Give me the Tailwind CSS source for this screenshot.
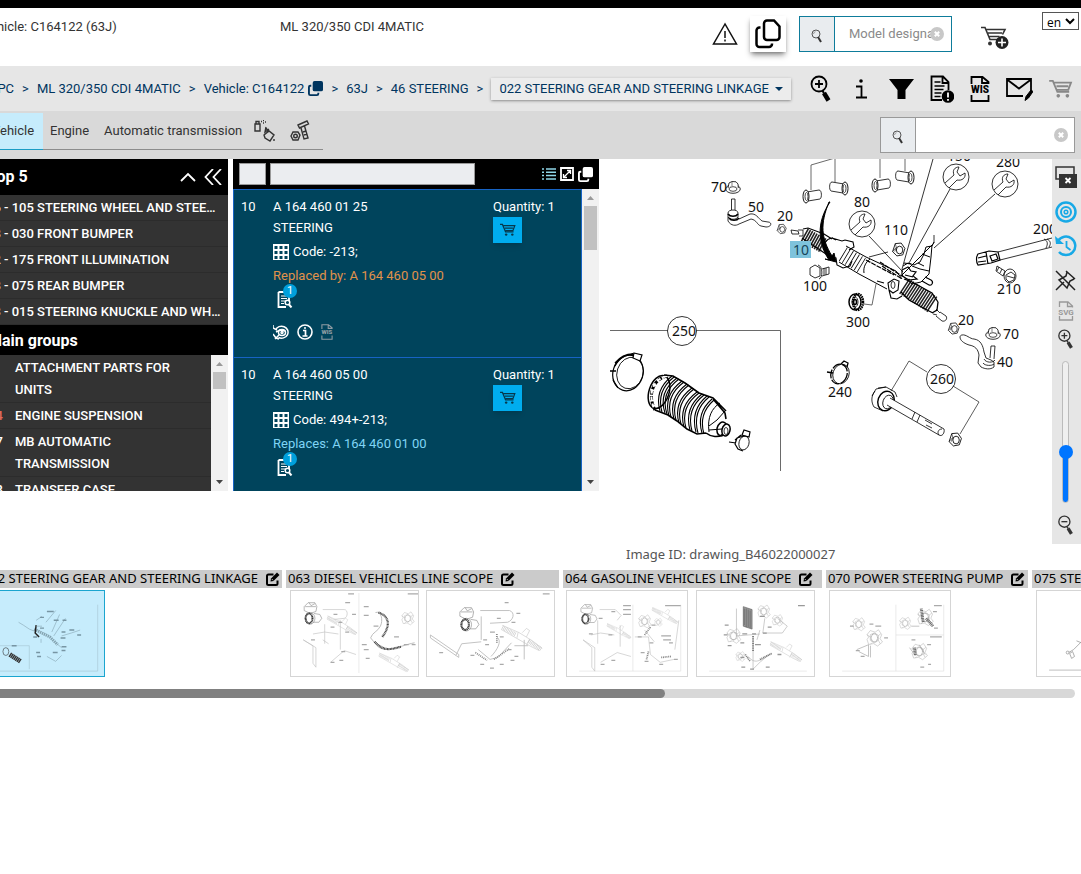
<!DOCTYPE html>
<html lang="en">
<head>
    <meta charset="utf-8"/>
    <meta content="width=device-width, initial-scale=1.0" name="viewport"/>
    <title>Parts catalogue - Steering gear and steering linkage</title>
    <script src="https://cdn.jsdelivr.net/npm/@tailwindcss/browser@4"></script>
</head>
<body class="bg-white overflow-x-hidden font-[Roboto,sans-serif] text-[13px] text-[#333]">

    <!-- shared icons -->
    <svg class="hidden">
        <symbol id="i-search" viewBox="0 0 12 14"><circle cx="5" cy="5" r="4" fill="none" stroke="#555"/><path d="M7 8l3 5" stroke="#333" stroke-width="2"/><path d="M2.500 5a2.500 2.500 0 0 1 2-2.300" fill="none" stroke="#999"/></symbol>
        <symbol id="i-clear" viewBox="0 0 14 14"><circle cx="7" cy="7" r="7" fill="#c8c8c8"/><path d="M4.800 4.800l4.400 4.400M9.200 4.800l-4.400 4.400" stroke="#fff" stroke-width="2"/></symbol>
        <symbol id="i-copy" viewBox="0 0 16 16"><rect x="5" y="0" width="11" height="11" rx="2" fill="currentColor"/><path d="M3.500 5H2.500a1.500 1.500 0 0 0-1.500 1.500v7A1.500 1.500 0 0 0 2.500 15h7A1.500 1.500 0 0 0 11 13.500V12.500" fill="none" stroke="currentColor" stroke-width="2"/></symbol>
        <symbol id="i-cart" viewBox="0 0 26 22"><path d="M0 2h4l5 12h13" fill="none" stroke="currentColor" stroke-width="2"/><path d="M5 4h19l-3 8H8.500M8 8h13" fill="none" stroke="currentColor" stroke-width="2"/><circle cx="10" cy="18.500" r="2" fill="currentColor"/><circle cx="20" cy="18.500" r="2" fill="currentColor"/></symbol>
        <symbol id="i-edit" viewBox="0 0 14 14"><path d="M7.500 2.500H2.500A1.500 1.500 0 0 0 1 4v7.500A1.500 1.500 0 0 0 2.500 13H10a1.500 1.500 0 0 0 1.500-1.500V8.500" fill="none" stroke="#000" stroke-width="2"/><path d="M4.500 9.500l.5-3L11 .5l2.500 2.500-6 6z" fill="#000"/><path d="M5.800 7l1.300 1.300" stroke="#fff" stroke-width=".7"/></symbol>
        <symbol id="i-zoomin" viewBox="0 0 21 27"><circle cx="9" cy="9" r="7.500" fill="none" stroke="currentColor" stroke-width="1.800"/><path d="M5 9h8M9 5v8" stroke="currentColor" stroke-width="1.800"/><path d="M12.500 15.500l1.500 3" stroke="currentColor" stroke-width="2"/><path d="M14 18l4.500 7.500" stroke="currentColor" stroke-width="4.500"/></symbol>
        <symbol id="i-zoomout" viewBox="0 0 21 27"><circle cx="9" cy="9" r="7.500" fill="none" stroke="currentColor" stroke-width="1.800"/><path d="M5 9h8" stroke="currentColor" stroke-width="1.800"/><path d="M12.500 15.500l1.500 3" stroke="currentColor" stroke-width="2"/><path d="M14 18l4.500 7.500" stroke="currentColor" stroke-width="4.500"/></symbol>
        <symbol id="i-wis" viewBox="0 0 20 26"><path d="M1.500 8V1h11l6 5v2M12 1v6h6M1.500 19v6h17v-6" fill="none" stroke="currentColor" stroke-width="1.800"/><text x="10" y="17" text-anchor="middle" font-family="Roboto,sans-serif" font-size="10" font-weight="900" fill="currentColor">WIS</text></symbol>
        <symbol id="i-grid" viewBox="0 0 16 16"><path d="M0 0h16v16H0z" fill="#fff"/><path d="M1.500 2h3v3h-3zM6.500 2h3v3h-3zM11.500 2h3v3h-3zM1.500 7h3v3h-3zM6.500 7h3v3h-3zM11.500 7h3v3h-3zM1.500 12h3v3h-3zM6.500 12h3v3h-3zM11.500 12h3v3h-3z" fill="#00445c"/></symbol>
        <symbol id="i-doc" viewBox="0 0 16 17"><path d="M1.500 1H12v9M1.500 1v15H9" fill="none" stroke="#fff" stroke-width="1.800"/><path d="M4 5h6M4 7.500h6M4 10h4M4 12.500h3" stroke="#fff"/><circle cx="10.500" cy="11.500" r="2.300" fill="none" stroke="#fff" stroke-width="1.500"/><path d="M12 13.500l2.500 3" stroke="#fff" stroke-width="2"/></symbol>
        <symbol id="i-wrench" viewBox="0 0 28 28"><circle cx="14" cy="14" r="13" fill="#fff" stroke="#000" stroke-width=".8"/><path d="M3 20l9-8c-2-5 1-8 5-8l-2 5 3 4 5-3c1 5-3 8-8 7l-8 8" fill="none" stroke="#000" stroke-width=".8"/></symbol>
        <symbol id="i-nut" viewBox="0 0 14 14"><path d="M4 1.500L9.500 1 13 6 11 12 5.500 13 1.500 9z" fill="#fff" stroke="#000" stroke-width=".8"/><ellipse cx="8" cy="7.500" rx="3" ry="3.600" fill="none" stroke="#000" stroke-width=".8"/><path d="M4 1.500L5 5 3.500 9M5 5l-3.500 4" fill="none" stroke="#000" stroke-width=".5"/></symbol>
        <symbol id="i-flange" viewBox="0 0 16 13"><ellipse cx="8" cy="8" rx="7.300" ry="4.300" fill="#fff" stroke="#000" stroke-width=".8"/><path d="M3 7l1-5 3-1.500 4 .3L13 3l.3 4" fill="#fff" stroke="#000" stroke-width=".8"/><ellipse cx="8" cy="8" rx="4" ry="2.300" fill="none" stroke="#000" stroke-width=".7"/><path d="M7 1v4" stroke="#000" stroke-width=".5"/></symbol>
        <symbol id="i-sleeve" viewBox="0 0 20 16"><path d="M5 4l12-2c3 0 3 8 1 9L6 13" fill="#fff" stroke="#000" stroke-width=".8"/><ellipse cx="4" cy="8.500" rx="3" ry="6.500" fill="#fff" stroke="#000" stroke-width=".9"/><ellipse cx="4.500" cy="8.500" rx="1.500" ry="4" fill="none" stroke="#000" stroke-width=".7"/></symbol>

        <!-- pieces used by the thumbnails -->
        <symbol id="t-pump" viewBox="0 0 24 24"><g fill="none" stroke="#888" stroke-width=".6"><path d="M2 5l4-4h7l2 4-1 5-6 2-6-3z"/><path d="M3 5h11M7 1l2 3 4-2"/><ellipse cx="8" cy="17" rx="5" ry="6"/><path d="M12 12l6 1 2 4-3 4h-6"/></g><ellipse cx="7" cy="17" rx="3.500" ry="5" fill="none" stroke="#333" stroke-width="2" stroke-dasharray="1 .4"/></symbol>
        <symbol id="t-rack" viewBox="0 0 40 26"><path d="M1 3l13 7M26 16l12 8" stroke="#ccc" stroke-width="4" stroke-dasharray=".7 .8"/><path d="M1 1l16 7 13 8 9 7M0 5l14 8 14 8 8 4M16 8l-1 5M27 14l-3 6M20 8l4-4 3 2-3 6" fill="none" stroke="#bbb" stroke-width=".5"/></symbol>
        <symbol id="t-blob" viewBox="0 0 24 24"><path d="M3 8l4-5 6 2 4-3 4 6-2 5 3 4-6 5-5-3-6 1-2-6 2-3zM7 8l5-2 5 3v6l-5 3-5-3zM3 8l4 3M17 9l3-2M17 15l2 4M9 18l-2 2" fill="none" stroke="#aaa" stroke-width=".6"/><ellipse cx="12" cy="12" rx="4" ry="5" fill="none" stroke="#999" stroke-width="1.500" stroke-dasharray=".6 .6"/></symbol>
    </svg>

    <div class="-ml-5">
        <div class="h-2 bg-black"></div>

        <!-- header -->
        <header class="flex h-[58px] pl-0.5 pr-0.5">
            <div class="flex flex-1 pt-2.5 leading-[18px]">
                <span class="w-[298px]">Vehicle: C164122 (63J)</span>
                <span>ML 320/350 CDI 4MATIC</span>
            </div>
            <div class="flex items-start pt-2">
                <svg class="w-[26px] h-6 mt-1.5 mr-3" viewBox="0 0 26 24" fill="none" stroke="#111" stroke-width="1.500"><path d="M13 2L1.500 22h23z"/><path d="M13 9v7M13 17.500v2"/></svg>
                <button class="flex size-9 items-center justify-center bg-white shadow-md shadow-black/40 mr-[13px]" aria-label="Copy">
                    <svg class="w-[26px] h-[30px]" viewBox="0 0 26 30" fill="none" stroke="#000" stroke-width="2.500"><path d="M12 1.500h7l5.500 6V18a3 3 0 0 1-3 3H12a3 3 0 0 1-3-3V4.500a3 3 0 0 1 3-3z"/><path d="M5.500 8.500H4.500A3 3 0 0 0 1.500 11.500V25a3 3 0 0 0 3 3H14a3 3 0 0 0 3-3v-.5"/></svg>
                </button>
                <div class="relative flex h-9 w-[153px] border border-[#0e7c9b] mr-[29px]">
                    <button class="flex w-[35px] items-center justify-center bg-[#e9ecef] border-r border-[#0e7c9b] pt-1" aria-label="Search"><svg class="w-3 h-3.5"><use href="#i-search"/></svg></button>
                    <input class="min-w-0 flex-1 pl-3.5 pr-[18px] outline-none placeholder:text-[#8a8a8a]" type="text" placeholder="Model designation" aria-label="Model designation"/>
                    <svg class="absolute right-[7px] top-2.5 size-3.5"><use href="#i-clear"/></svg>
                </div>
                <a href="#" class="mt-2.5 mr-[33px] text-[#333]" aria-label="Add to cart">
                    <svg class="w-7 h-[23px]" viewBox="0 0 28 23"><path d="M0 1.500h4l5 12h11M5 3.500h19l-2.500 5M7 7h14M8.500 10.500h10" fill="none" stroke="#333" stroke-width="1.600"/><circle cx="9" cy="17.500" r="2" fill="#333"/><circle cx="21" cy="16.500" r="6.500" fill="#222"/><path d="M21 12.500v8M17 16.500h8" stroke="#fff" stroke-width="1.600"/></svg>
                </a>
                <select class="-mt-1 h-[18px] w-[37px] border border-[#555] bg-white pl-0 text-black font-['Open_Sans',sans-serif] text-xs leading-4" aria-label="Language"><option>en</option></select>
            </div>
        </header>

        <!-- breadcrumb -->
        <div class="flex h-[45px] items-center bg-[#e6e6e6] pl-2.5 pr-2 text-[#00355f]">
            <nav class="flex flex-1 items-center gap-2 whitespace-nowrap">
                <a href="#">EPC</a><span>&gt;</span>
                <a href="#">ML 320/350 CDI 4MATIC</a><span>&gt;</span>
                <a href="#" class="flex items-center gap-1">Vehicle: C164122 <svg class="size-[15px]"><use href="#i-copy"/></svg></a><span>&gt;</span>
                <a href="#">63J</a><span>&gt;</span>
                <a href="#">46 STEERING</a><span>&gt;</span>
                <button class="flex h-[22px] items-center gap-1.5 bg-[#ececec] px-2 shadow-sm shadow-black/30">022 STEERING GEAR AND STEERING LINKAGE <svg class="w-2 h-1" viewBox="0 0 8 4"><path d="M0 0h8L4 4z" fill="#00355f"/></svg></button>
            </nav>
            <div class="flex items-center gap-4 text-black">
                <svg class="w-[21px] h-[27px] mr-2"><use href="#i-zoomin"/></svg>
                <svg class="w-3 h-5 mr-1.5" viewBox="0 0 12 20"><path d="M1 7.500h5.500V18.500M1 18.500h11" fill="none" stroke="#000" stroke-width="1.800"/><circle cx="6" cy="2" r="1.800"/></svg>
                <svg class="w-[25px] h-[22px]" viewBox="0 0 25 22"><path d="M0 1h25l-8.500 11v9h-8v-9z"/></svg>
                <svg class="w-6 h-7" viewBox="0 0 24 28"><path d="M12 25H1.500V1.500H13L18.500 7v8M12.500 2v6h6" fill="none" stroke="#000" stroke-width="1.800"/><path d="M4.500 7h6M4.500 11h10M4.500 14.500h9M4.500 18h7M4.500 21.500h6" stroke="#000" stroke-width="1.600"/><circle cx="18" cy="21.500" r="6.300"/><path d="M18 17.500v5M18 24v1.800" stroke="#fff" stroke-width="1.800"/></svg>
                <svg class="w-5 h-[26px]"><use href="#i-wis"/></svg>
                <svg class="w-[27px] h-6" viewBox="0 0 27 24"><path d="M17 19H1V2h24v13M1 2.500l12 9 12-9" fill="none" stroke="#000" stroke-width="1.800"/><path d="M19 23.500l1-4L25 13l2 1.500-4.500 6.500z" stroke="#000"/></svg>
                <svg class="w-6 h-5 text-[#888]"><use href="#i-cart"/></svg>
            </div>
        </div>

        <!-- catalogue tabs -->
        <div class="flex h-12 items-start justify-between bg-[#d9d9d9] pr-1.5">
            <nav class="flex h-[37px] mt-0.5">
                <a href="#" class="flex w-[63px] items-center border-b border-[#1b9cc4] bg-[#c6ecfc] pl-3">Vehicle</a>
                <div class="flex w-[280px] items-center border-b border-[#8c8c8c] pl-[7px]">
                    <a href="#" class="mr-[15px]">Engine</a>
                    <a href="#" class="mr-3 whitespace-nowrap">Automatic transmission</a>
                    <svg class="w-[22px] h-[22px] mr-3.5" viewBox="0 0 22 22" fill="none" stroke="#333" stroke-width="1.400"><path d="M1 4h5v7H1zM2 4V1.500h3V4M7 1.500h1M9 .5h1M9 3h1M11 2h1M12 7l-1 5 4-3M10 15l5-4 5 4-4 6-5-3zM12 8l3 4M20 19v2"/></svg>
                    <svg class="w-5 h-[22px]" viewBox="0 0 20 22" fill="none" stroke="#333" stroke-width="1.400"><path d="M1 16l2-4h5l2 3-2 5H3z"/><circle cx="5.500" cy="16" r="1.800"/><path d="M8 5l9-4 1.500 3-9 4zM11 8l3 11 4-1-3.500-12M13 12l3-1M14 15l3-1"/></svg>
                </div>
            </nav>
            <div class="relative mt-1.5 flex h-9 w-[195px] border border-[#999] bg-white">
                <button class="flex w-[35px] items-center justify-center bg-[#e9ecef] border-r border-[#999] pt-1" aria-label="Search parts"><svg class="w-3 h-3.5"><use href="#i-search"/></svg></button>
                <input class="min-w-0 flex-1 px-2 outline-none" type="text" aria-label="Search parts"/>
                <svg class="absolute right-1.5 top-2.5 size-3.5"><use href="#i-clear"/></svg>
            </div>
        </div>

        <main class="flex items-start">
            <!-- group navigation -->
            <aside class="mr-[5px] flex h-[332px] w-[248px] shrink-0 flex-col overflow-hidden bg-[#333] font-medium text-white">
                <div class="flex h-9 shrink-0 items-center bg-black pl-2 pr-1.5">
                    <h2 class="flex-1 text-base font-bold">Top 5</h2>
                    <svg class="w-4 h-2.5 mr-2" viewBox="0 0 16 10" fill="none" stroke="#fff" stroke-width="1.800"><path d="M1 9l7-7 7 7"/></svg>
                    <svg class="w-[18px] h-4" viewBox="0 0 18 16" fill="none" stroke="#fff" stroke-width="1.800"><path d="M9 0L1.500 8 9 16M17 0L9.500 8 17 16"/></svg>
                </div>
                <ul class="shrink-0 leading-[25px]">
                    <li class="truncate border-b border-[#2c2c2c] pl-1.5 pr-1.5">46 - 105 STEERING WHEEL AND STEERING</li>
                    <li class="truncate border-b border-[#2c2c2c] pl-1.5 pr-1.5">88 - 030 FRONT BUMPER</li>
                    <li class="truncate border-b border-[#2c2c2c] pl-1.5 pr-1.5">82 - 175 FRONT ILLUMINATION</li>
                    <li class="truncate border-b border-[#2c2c2c] pl-1.5 pr-1.5">88 - 075 REAR BUMPER</li>
                    <li class="truncate border-b border-[#2c2c2c] pl-1.5 pr-1.5">33 - 015 STEERING KNUCKLE AND WHEEL</li>
                </ul>
                <h2 class="h-[30px] shrink-0 bg-black pl-2 text-base font-bold leading-8">Main groups</h2>
                <div class="flex min-h-0 flex-1">
                    <ul class="flex-1 overflow-hidden leading-[22px]">
                        <li class="flex border-b border-[#2c2c2c] pt-0.5 pb-px pl-2"><span class="w-[27px]"></span><span class="w-[170px]">ATTACHMENT PARTS FOR UNITS</span></li>
                        <li class="flex border-b border-[#2c2c2c] pt-0.5 pb-px pl-2"><span class="w-[27px] text-[#e06a5a]">24</span><span>ENGINE SUSPENSION</span></li>
                        <li class="flex border-b border-[#2c2c2c] pt-0.5 pb-px pl-2"><span class="w-[27px]">27</span><span class="w-[120px]">MB AUTOMATIC TRANSMISSION</span></li>
                        <li class="flex border-b border-[#2c2c2c] pt-0.5 pb-px pl-2"><span class="w-[27px]">28</span><span>TRANSFER CASE</span></li>
                    </ul>
                    <div class="flex w-[17px] flex-col items-center bg-[#f1f1f1] py-[7px]">
                        <svg class="w-[7px] h-1" viewBox="0 0 7 4"><path d="M0 4h7L3.500 0z" fill="#999"/></svg>
                        <div class="mt-1.5 h-[17px] w-[13px] bg-[#c1c1c1]"></div>
                        <svg class="mt-auto w-[7px] h-1" viewBox="0 0 7 4"><path d="M0 0h7L3.500 4z" fill="#444"/></svg>
                    </div>
                </div>
            </aside>

            <!-- parts list -->
            <section class="flex h-[332px] w-[366px] shrink-0 flex-col overflow-hidden">
                <div class="flex h-[30px] shrink-0 items-center bg-black pl-1.5 pr-1.5">
                    <input class="mr-1 h-[22px] w-[27px] border border-[#999] bg-[#ebedf0]" type="text" aria-label="Position"/>
                    <input class="h-[22px] w-[205px] border border-[#999] bg-[#ebedf0]" type="text" aria-label="Filter parts"/>
                    <div class="ml-auto flex items-center gap-1">
                        <svg class="w-3.5 h-3" viewBox="0 0 14 12" stroke="#8fd6e8" stroke-width="1.500"><path d="M0 1h2M4 1h10M0 4.300h2M4 4.300h10M0 7.600h2M4 7.600h10M0 11h2M4 11h10"/></svg>
                        <svg class="size-3.5" viewBox="0 0 14 14"><path d="M1 1h12v12H1z" fill="none" stroke="#fff" stroke-width="1.800"/><path d="M4 10l6-6M7 3.500h3.500V7M3.500 7v3.500H7" fill="none" stroke="#fff" stroke-width="1.300"/></svg>
                        <svg class="size-[15px] text-white"><use href="#i-copy"/></svg>
                    </div>
                </div>
                <div class="flex min-h-0 flex-1">
                    <div class="flex-1 overflow-hidden border-x border-[#1763c4] bg-[#00445c] text-white">
                        <article class="flex h-[168px] border-t border-[#1763c4] pl-[7px] pt-[7px]">
                            <span class="w-8 leading-5">10</span>
                            <div class="w-[220px]">
                                <p class="leading-5">A 164 460 01 25</p>
                                <p class="leading-[22px]">STEERING</p>
                                <p class="flex h-[26px] items-center gap-1"><svg class="size-4"><use href="#i-grid"/></svg>Code: -213;</p>
                                <p class="leading-[22px] text-[#e0924a]">Replaced by: A 164 460 05 00</p>
                                <div class="relative ml-1 mt-1 h-[17px] w-4">
                                    <svg class="w-4 h-[17px]"><use href="#i-doc"/></svg>
                                    <span class="absolute left-1.5 -top-[7px] size-3.5 rounded-full bg-[#00a0dc] text-center text-[11px] leading-3.5">1</span>
                                </div>
                                <div class="mt-4 flex items-center gap-2">
                                    <svg class="size-4" viewBox="0 0 16 16" fill="none" stroke="#fff" stroke-width="1.500"><path d="M2.500 6a6.500 6 0 1 1 3 7.500M0 1v3l4 2M3 8l4-2 5 1M0 10l3 4 3 1M2 15l4-4"/><ellipse cx="9" cy="8.500" rx="3.500" ry="3"/><circle cx="9" cy="8.500" r="1"/></svg>
                                    <svg class="size-4" viewBox="0 0 16 16"><circle cx="8" cy="8" r="7" fill="none" stroke="#fff" stroke-width="1.600"/><path d="M6 6.500h2.500v5M5.500 12h5M7 4h2" fill="none" stroke="#fff" stroke-width="1.700"/></svg>
                                    <svg class="w-3 h-4 text-[#8f9ca3]"><use href="#i-wis"/></svg>
                                </div>
                            </div>
                            <div>
                                <p class="leading-5">Quantity: 1</p>
                                <button class="flex h-[26px] w-[29px] items-center justify-center bg-[#00adef] text-[#06384c] shadow-md" aria-label="Add to cart"><svg class="w-4 h-3.5"><use href="#i-cart"/></svg></button>
                            </div>
                        </article>
                        <article class="flex h-[168px] border-t border-[#1763c4] pl-[7px] pt-[7px]">
                            <span class="w-8 leading-5">10</span>
                            <div class="w-[220px]">
                                <p class="leading-5">A 164 460 05 00</p>
                                <p class="leading-[22px]">STEERING</p>
                                <p class="flex h-[26px] items-center gap-1"><svg class="size-4"><use href="#i-grid"/></svg>Code: 494+-213;</p>
                                <p class="leading-[22px] text-[#7fd4f5]">Replaces: A 164 460 01 00</p>
                                <div class="relative ml-1 mt-1 h-[17px] w-4">
                                    <svg class="w-4 h-[17px]"><use href="#i-doc"/></svg>
                                    <span class="absolute left-1.5 -top-[7px] size-3.5 rounded-full bg-[#00a0dc] text-center text-[11px] leading-3.5">1</span>
                                </div>
                            </div>
                            <div>
                                <p class="leading-5">Quantity: 1</p>
                                <button class="flex h-[26px] w-[29px] items-center justify-center bg-[#00adef] text-[#06384c] shadow-md" aria-label="Add to cart"><svg class="w-4 h-3.5"><use href="#i-cart"/></svg></button>
                            </div>
                        </article>
                    </div>
                    <div class="flex w-[17px] flex-col items-center bg-[#f1f1f1] py-[7px]">
                        <svg class="w-[7px] h-1" viewBox="0 0 7 4"><path d="M0 4h7L3.500 0z" fill="#999"/></svg>
                        <div class="mt-1.5 h-11 w-[13px] bg-[#c1c1c1]"></div>
                        <svg class="mt-auto w-[7px] h-1" viewBox="0 0 7 4"><path d="M0 0h7L3.500 4z" fill="#444"/></svg>
                    </div>
                </div>
            </section>

            <!-- exploded drawing -->
            <figure class="min-w-0 flex-1">
                <svg class="block h-[385px] w-full" viewBox="599 159 453 385" fill="none" stroke="#000" stroke-width=".8">
                    <!-- rack, left end -->
                    <path d="M791 230l7 1 1 3-7 0zM798 230h5v6h-4"/>
                    <path d="M804 235l20 11" stroke="#222" stroke-width="15" stroke-dasharray="1.600 .9"/>
                    <path d="M803 229l5-1 16 6 8 5M802 238l18 12 12 8" stroke-width="1.200"/>
                    <path d="M824 250c-1-6 2-11 8-12l4 2M832 238l10 3 3-1 8 2 1 5-5 3M831 257l5 1 1 7 6 3 7-2 2-5M824 250l8 7" stroke-width="1.100"/>
                    <path d="M843 254l20 12" stroke-width="16" stroke-dasharray=".8 2.700"/>
                    <path d="M846 246l20 11M839 262l20 12M866 257l30 14 6 8M859 274l28 15M870 259c-4 3-7 8-6 14" stroke-width="1"/>
                    <path d="M866 260l28 15M880 262l22 14M882 266l20 13" stroke-width="1.200" stroke-dasharray="5 1"/>
                    <path d="M888 283l6-4 5 2-1 9-5 3-4-3zM889 290l2 8 6 1 5-3M884 283l-7-2" stroke-width="1.100"/>
                    <ellipse cx="893" cy="285" rx="2" ry="3.500"/>
                    <path d="M904 286l29 19" stroke="#222" stroke-width="18" stroke-dasharray="1.500 1"/>
                    <path d="M904 279l8 3 20 11 6 9M901 292l8 8 18 10 6 3M938 302l-1 8-5 3" stroke-width="1.300"/>
                    <path d="M936 309l4 4M933 314l4 1M940 312l6 4c2 3-1 6-4 5l-6-5"/>
                    <!-- pinion and valve -->
                    <path d="M903 266l5-3 6 2 6-3 4-8 2-7 6-1 2-4M932 245l-1 12-2 17-8 8-9 2-10-9zM912 266l8 3 9 2M918 263l6 3M922 254l8 3" stroke-width="1"/>
                    <path d="M902 270l6-3 3 4 5 1-3 4 4 3-8 1-7-4zM904 263l7 1M905 275l8 2M925 277l6 3c3 2 1 6-2 5l-7-4" stroke-width="1.200"/>
                    <path d="M932 245l2-2v-8"/>
                    <!-- leader lines -->
                    <path d="M869 236l34 36M933 159l-31 110M950 189l-41 74M995 194l-61 54M888 252l-19 5"/>
                    <path d="M811 190v-25l24-7v24M880 158v20M905 158v13M864 304l8 1 4-21" stroke="#444"/>
                    <!-- curved arrow -->
                    <path d="M830 202c-14 21-12 41-1 58l-4-1 11 3-2-9-2 3c-11-18-12-32-3-54z" fill="#000" stroke-width="1"/>
                    <!-- ball joint 50 -->
                    <path d="M731.500 199v11M735 199v11M731.500 199h3.500M728 213c0-4 10-4 10 0v4c-2 3-8 3-10 0zM728 217v4c3 5 8 5 11 3l12-5c6 1 6 6 10 7l5 1c6 0 6-5 2-5l-6-1c-4-3-6-8-12-7l-11 5"/>
                    <path d="M728 214c2 3 8 3 10 0M729 218c2 3 8 3 10 0" stroke-width="1.600"/>
                    <use href="#i-flange" x="725" y="181" width="16" height="13"/>
                    <use href="#i-nut" x="776" y="223" width="11" height="12"/>
                    <use href="#i-nut" x="891" y="242" width="15" height="15"/>
                    <use href="#i-nut" x="947" y="322" width="13" height="13"/>
                    <use href="#i-nut" x="947" y="432" width="16" height="15"/>
                    <use href="#i-flange" x="985" y="327" width="16" height="13"/>
                    <use href="#i-sleeve" x="802" y="188" width="20" height="16"/>
                    <use href="#i-sleeve" x="871" y="177" width="20" height="16"/>
                    <use href="#i-sleeve" x="-849" y="180" width="20" height="16" transform="scale(-1 1)"/>
                    <use href="#i-sleeve" x="-915" y="169" width="20" height="16" transform="scale(-1 1)"/>
                    <use href="#i-wrench" x="848" y="210" width="28" height="28"/>
                    <use href="#i-wrench" x="942" y="163" width="28" height="28"/>
                    <use href="#i-wrench" x="991" y="170" width="28" height="28"/>
                    <!-- bolt 100, plug 300, bolt 210 -->
                    <path d="M810 268l5-3 5 3v8l-5 2-5-3zM818 265c5 1 5 13 1 14M822 269l7-2v7l-7 2M824 268v7M826 268v7"/>
                    <ellipse cx="855" cy="302" rx="6" ry="8" stroke-width="1.500"/>
                    <ellipse cx="858" cy="302" rx="5" ry="8" stroke-width="2.500" stroke-dasharray="1.500 .7"/>
                    <ellipse cx="855" cy="302" rx="3" ry="5"/>
                    <ellipse cx="855" cy="302" rx="1.500" ry="2.500" stroke-width="1.500"/>
                    <path d="M997 266l8 5-2 5-7-5zM999 267l-2 4M1002 269l-2 4"/>
                    <ellipse cx="1010" cy="276" rx="6" ry="7"/>
                    <path d="M1006 275l5-3 4 3-1 5-5 2-3-3zM1007 276l7 2"/>
                    <!-- shaft 200 -->
                    <path d="M998 252l54-14M1000 260l52-13M1044 239c4 2 4 5 2 9M1047 239c4 2 4 5 2 8"/>
                    <path d="M978 254l11-3 9 1 2 8-9 3-13 2c-2-3-2-8 0-11zM986 252l2 12M978 258l8-2M978 262l8-1M990 256l6-2 2 5-6 2z" stroke-width="1.200"/>
                    <!-- tie rod end 40 -->
                    <path d="M962 335c4-1 8 4 12 4 7 1 9 7 10 13l2 6 5 2 3 2v5c-4 3-9 2-13 0l-3-4 1-8c-1-6-4-9-10-10-6-2-9-5-9-8 0-1 1-2 2-2zM990 358l1-12h4l-1 13M984 359c2 4 9 4 11 1M983 363c2 3 9 3 11 1"/>
                    <!-- kit 250 -->
                    <path d="M610 330.500h170.500V471" stroke="#444"/>
                    <circle cx="682" cy="331" r="14.500" fill="#fff"/>
                    <ellipse cx="628" cy="373" rx="15" ry="18" transform="rotate(18 628 373)" stroke-width="1.200"/>
                    <ellipse cx="630" cy="373" rx="13" ry="16" transform="rotate(18 630 373)"/>
                    <path d="M615 366c4-8 9-11 19-12M615 363c5-6 11-9 18-9M613 380l5 8M610 371h6" stroke-width="1.300"/>
                    <path d="M634 353l8 2-2 6-7-3z" fill="#fff" stroke-width="1.200"/>
                    <ellipse cx="659" cy="392" rx="10" ry="17" transform="rotate(18 659 392)" stroke-width="1.500"/>
                    <path d="M667 376c-14 3-20 19-12 34" stroke-width="3" stroke-dasharray="4 1.500"/>
                    <path d="M667 376c-14 3-20 19-12 34" stroke="#fff" stroke-width="2" stroke-dasharray="4 3"/>
                    <path d="M664 375l9 1 12 7 14 10 14 5 13 13M655 410l13 5 9 6 10 8 10 5 9-1M713 399l12 14 1 6M706 433c5 4 13 5 17 1" stroke-width="1.600"/>
                    <g id="ribs" stroke-width="1.100">
                        <path d="M672 376q-18 14-12 35M677 378q-19 14-12 35M682 381q-19 14-13 35M687 384q-19 14-13 35M692 388q-19 14-13 35M697 392q-19 14-13 35M702 394q-18 14-12 36M707 396q-17 14-11 36M712 399q-16 14-10 34"/>
                    </g>
                    <use href="#ribs" x="2" y="1"/>
                    <path d="M720 403c-8 5-13 14-11 29M709 426l8-6 8-9M709 430l13-1" stroke-width="1"/>
                    <ellipse cx="722" cy="429" rx="5" ry="7" transform="rotate(15 722 429)" stroke-width="1.500"/>
                    <ellipse cx="726" cy="430" rx="4" ry="6" transform="rotate(15 726 430)" fill="#fff" stroke-width="1.500"/>
                    <ellipse cx="726" cy="431" rx="2" ry="3.500"/>
                    <ellipse cx="744" cy="443" rx="5" ry="7" transform="rotate(15 744 443)"/>
                    <path d="M744 436l-7 2-2 6 3 5 5 2M729 442l7 1M742 435l2-5 6 2-1 5zM735 440l6-5" stroke-width="1.200"/>
                    <!-- clamp 240 -->
                    <ellipse cx="839" cy="374" rx="8" ry="10" transform="rotate(20 839 374)" stroke-width="1.300" stroke-dasharray="9 1.500"/>
                    <ellipse cx="841" cy="374" rx="8" ry="10" transform="rotate(20 841 374)"/>
                    <path d="M827 372l6 1M841 364l3-3 4 2-1 4" stroke-width="1.300"/>
                    <!-- kit 260 -->
                    <path d="M927 372l-18-11-18 30M953 386l26 16-19 32" stroke="#333"/>
                    <circle cx="941" cy="379" r="14.500"/>
                    <path d="M878 388l8-1 9 5M875 391c-4 5-4 11-1 16l9 4M886 387l-10 2M872 396l4-7M895 392l2 5"/>
                    <ellipse cx="886" cy="401" rx="8" ry="10" transform="rotate(20 886 401)" stroke-width="1.400"/>
                    <ellipse cx="888" cy="402" rx="5" ry="7" transform="rotate(20 888 402)"/>
                    <path d="M890 398l54 31c1 4-2 8-5 6l-52-30" fill="#fff"/>
                    <path d="M942 429c-4 0-5 4-3 6M915 412l-3 7M920 415l-3 7M925 420l7 4M926 425l6 3"/>
                    <!-- position numbers -->
                    <path d="M790 241h21v17h-21z" fill="#7ec3dc" stroke="none"/>
                    <g fill="#111" stroke="none" font-family="'Noto Sans',sans-serif" font-size="14">
                        <text x="711" y="192">70</text>
                        <text x="748" y="212">50</text>
                        <text x="777" y="221">20</text>
                        <text x="793" y="255" fill="#17455a">10</text>
                        <text x="803" y="291">100</text>
                        <text x="854" y="207">80</text>
                        <text x="884" y="235">110</text>
                        <text x="947" y="161">150</text>
                        <text x="996" y="167">280</text>
                        <text x="1033" y="234">200</text>
                        <text x="997" y="294">210</text>
                        <text x="846" y="327">300</text>
                        <text x="958" y="325">20</text>
                        <text x="1003" y="339">70</text>
                        <text x="997" y="367">40</text>
                        <text x="672" y="336">250</text>
                        <text x="828" y="397">240</text>
                        <text x="930" y="384">260</text>
                    </g>
                </svg>
                <figcaption class="pl-[27px] font-['Noto_Sans',sans-serif] leading-5 text-[#555]">Image ID: drawing_B46022000027</figcaption>
            </figure>

            <!-- drawing tools -->
            <div class="flex h-[385px] w-[29px] flex-col items-center bg-[#e6e6e6] pt-1.5 pr-0.5">
                <svg class="w-[22px] h-6" viewBox="0 0 22 24"><path d="M1 2h18v12H1z" fill="none" stroke="#333" stroke-width="1.500"/><path d="M4 9h18v14H4z" fill="#333"/><path d="M10.500 13l5 5M15.500 13l-5 5" stroke="#fff" stroke-width="1.800"/></svg>
                <svg class="mt-3 size-[22px]" viewBox="0 0 22 22" fill="none" stroke="#18a9e6"><circle cx="11" cy="11" r="9.500" stroke-width="2.500"/><circle cx="11" cy="11" r="5" stroke-width="2"/><circle cx="11" cy="11" r="1.800" stroke-width="1.500"/></svg>
                <svg class="mt-3 size-[22px]" viewBox="0 0 22 22" fill="none" stroke="#18a9e6" stroke-width="2.500"><path d="M3 6a9.300 9.300 0 1 1 1 11"/><path d="M0 1l1 8h8z" fill="#18a9e6" stroke="none"/><path d="M11.500 6v6l4 3" stroke-width="1.800"/></svg>
                <svg class="mt-3 size-[22px]" viewBox="0 0 22 22" fill="none" stroke="#222" stroke-width="1.500"><path d="M1 2l19 19M1 21l8-8M11 2l9 8M12 3l-1 4-7 4 8 8 3-7 4-2"/></svg>
                <svg class="mt-2.5 w-4 h-5" viewBox="0 0 16 20"><path d="M1.500 6V1H10l4.500 4v1.500M9.500 1v4.500h5M1.500 15v4h13v-4" fill="none" stroke="#999" stroke-width="1.300"/><text x="8" y="13.500" text-anchor="middle" font-family="Roboto,sans-serif" font-size="8" font-weight="700" fill="#999">SVG</text></svg>
                <svg class="mt-2 w-[17px] h-5 text-[#333]"><use href="#i-zoomin"/></svg>
                <input class="mt-3 h-[142px] w-3.5 appearance-none bg-transparent [writing-mode:vertical-lr] [direction:rtl] [&::-webkit-slider-runnable-track]:h-full [&::-webkit-slider-runnable-track]:w-[7px] [&::-webkit-slider-runnable-track]:rounded-full [&::-webkit-slider-runnable-track]:border [&::-webkit-slider-runnable-track]:border-[#bbb] [&::-webkit-slider-runnable-track]:bg-[linear-gradient(to_top,#0075ff_36%,#efefef_36%)] [&::-webkit-slider-thumb]:-ml-1 [&::-webkit-slider-thumb]:size-3.5 [&::-webkit-slider-thumb]:appearance-none [&::-webkit-slider-thumb]:rounded-full [&::-webkit-slider-thumb]:bg-[#0075ff]" type="range" min="0" max="100" value="34" aria-label="Zoom"/>
                <svg class="mt-3 w-[17px] h-5 text-[#333]"><use href="#i-zoomout"/></svg>
            </div>
        </main>

        <!-- subgroup strip -->
        <section class="flex gap-1 overflow-hidden font-['Noto_Sans',sans-serif] text-black whitespace-nowrap pt-1.5">
            <div class="w-[302px] shrink-0">
                <h3 class="flex h-[18px] items-center gap-2 bg-[#cbcbcb]"><a href="#" class="w-[278px] text-right">022 STEERING GEAR AND STEERING LINKAGE</a><svg class="size-3.5"><use href="#i-edit"/></svg></h3>
                <a href="#" class="mt-0.5 block h-[87px] w-[125px] border border-[#1ba5cf] bg-[#c6ecfc]">
                    <svg class="h-full w-full" viewBox="-20 590 125 87" fill="none" stroke="#84a3b0" stroke-width=".6">
                        <path d="M99 604v68H-18M-18 646H29v24" stroke="#a4c3d0"/>
                        <path d="M34 629l16 8 8 8" stroke-width="3" stroke-dasharray="1.500 .7"/>
                        <path d="M36 625l-1 8 4 4" stroke="#222" stroke-width="1.500"/>
                        <path d="M18 622l5 3 6 4 5 2M36 620l6-4M46 622l10-12M52 632l8-18M54 636l12-18M62 636l10-3 9-3M56 643l6 5M47 657l9 5 6-6M36 626h6M41 639v4"/>
                        <path d="M47 611h7M40 617h4M54 620h5M63 620h4M62 632h4M70 630h5M78 635h4M61 638h5M62 647h5M62 651h4M53 653h5M36 653h4M37 657h4M33 637h4M11 646h5M40 628h4" stroke="#7795a3" stroke-width="1.500"/>
                        <ellipse cx="5" cy="652" rx="3" ry="4" stroke="#333"/>
                        <path d="M9 655l11 7" stroke="#333" stroke-width="5" stroke-dasharray="1.500 .4"/>
                    </svg>
                </a>
            </div>
            <div class="w-[273px] shrink-0">
                <h3 class="flex h-[18px] items-center gap-2 bg-[#cbcbcb] pl-0.5"><a href="#">063 DIESEL VEHICLES LINE SCOPE</a><svg class="size-3.5"><use href="#i-edit"/></svg></h3>
                <div class="mt-0.5 flex gap-[7px] pl-1">
                    <a href="#" class="h-[87px] w-[129px] border border-[#d5d5d5]">
                        <svg class="h-full w-full" viewBox="290 590 129 87" fill="none" stroke="#bbb" stroke-width=".6">
                            <path d="M359 592v82" stroke="#ddd"/>
                            <use href="#t-pump" x="301" y="601" width="24" height="24"/>
                            <use href="#t-rack" x="326" y="614" width="32" height="22"/>
                            <use href="#t-rack" x="379" y="652" width="32" height="22"/>
                            <use href="#t-blob" x="399" y="610" width="20" height="16"/>
                            <path d="M322 609h22c4 0 4 8 0 9l-10 1M324 624v20M340 620v30M302 640l13 8v20l-3-4v-18zM330 663l14-12 12 4M312 634l12-2 14 2M322 640l6 4"/>
                            <path d="M376 612c6-2 8 8 5 14s-8 6-10 12l5 6c8 12 24 2 40-1" stroke-width="1"/>
                            <path d="M379 612c12 4 12 14 4 25M375 642c10 10 16 8 27 5" stroke="#444" stroke-width="2.200" stroke-dasharray="1 .5"/>
                            <path d="M345 602h5M352 614h4M333 614h4M338 622h4M330 627h4M345 632h4M310 640h4M341 652h4M330 663h4M339 661h4M364 606h5M364 615h5M374 626h5M362 645h5M364 650h5M366 659h4M395 637h5M405 645h5M413 645h4M409 593h16M348 593h6" stroke="#aaa" stroke-width="1.300"/>
                        </svg>
                    </a>
                    <a href="#" class="h-[87px] w-[129px] border border-[#d5d5d5]">
                        <svg class="h-full w-full" viewBox="426 590 129 87" fill="none" stroke="#bbb" stroke-width=".6">
                            <use href="#t-pump" x="457" y="605" width="26" height="28"/>
                            <use href="#t-rack" x="501" y="624" width="44" height="28"/>
                            <path d="M480 610h30c6 2 4 10-2 12l-18 1M481 616v24M429 638l29 20v-3l-29-20zM455 656l6-12 20-2M478 650l12 10 8-2 14-15M497 637c6 4 0 14-6 20M515 646h14M525 640v20" stroke-width=".9"/>
                            <path d="M475 653l12 8M494 660l16-11M497 634v10" stroke="#888" stroke-width="1.800" stroke-dasharray="1 1"/>
                            <path d="M505 602h4M517 613h4M497 618h4M512 622h4M490 632h5M500 637h4M485 645h4M438 653h4M470 656h4M480 665h4M490 669h4M500 665h4M511 661h4M508 650h4M515 657h4M483 640h4M544 593h7" stroke="#aaa" stroke-width="1.300"/>
                        </svg>
                    </a>
                </div>
            </div>
            <div class="w-[259px] shrink-0">
                <h3 class="flex h-[18px] items-center gap-2 bg-[#cbcbcb] pl-0.5"><a href="#">064 GASOLINE VEHICLES LINE SCOPE</a><svg class="size-3.5"><use href="#i-edit"/></svg></h3>
                <div class="mt-0.5 flex gap-2 pl-[3px]">
                    <a href="#" class="h-[87px] w-[122px] border border-[#d5d5d5]">
                        <svg class="h-full w-full" viewBox="566 590 122 87" fill="none" stroke="#bbb" stroke-width=".6">
                            <path d="M578 672h104v-68M633 604v68" stroke="#ddd"/>
                            <use href="#t-pump" x="578" y="602" width="22" height="24"/>
                            <use href="#t-blob" x="637" y="612" width="16" height="18"/>
                            <use href="#t-blob" x="654" y="616" width="10" height="12"/>
                            <use href="#t-rack" x="652" y="606" width="28" height="18"/>
                            <use href="#t-rack" x="606" y="618" width="26" height="26"/>
                            <path d="M599 609h16l6 6-4 5M597 620v24M582 640l12 8v24l-3-4v-20zM600 663l17-10 14 4M620 625v22M635 637h14l2 18 10 8 14-3M645 630l10 12M680 620l-4 30M590 635l10-2 14 2"/>
                            <path d="M649 652l-2 8M645 635l6-8M662 658l10-1" stroke="#888" stroke-width="1.800" stroke-dasharray="1 .8"/>
                            <path d="M623 605h8M623 609h8M623 614h8M666 605h16M588 634h4M598 618h4M611 611h4M608 635h4M600 665h4M611 661h4M638 637h4M650 643h4M641 653h4M645 662h4M670 643h4M662 636h10M664 640h8M675 660h4M652 625h4M660 665h4" stroke="#aaa" stroke-width="1.300"/>
                        </svg>
                    </a>
                    <a href="#" class="h-[87px] w-[119px] border border-[#d5d5d5]">
                        <svg class="h-full w-full" viewBox="696 590 119 87" fill="none" stroke="#aaa" stroke-width=".6">
                            <path d="M708 672h100" stroke="#ddd"/>
                            <path d="M743 606l9 3v20l-9-3z" fill="#999" stroke="#555"/>
                            <path d="M744 608v17M746 608v19M748 609v18M750 610v18" stroke="#555"/>
                            <use href="#t-blob" x="755" y="603" width="18" height="16"/>
                            <use href="#t-blob" x="771" y="612" width="14" height="16"/>
                            <use href="#t-blob" x="724" y="625" width="18" height="22"/>
                            <use href="#t-blob" x="734" y="650" width="12" height="14"/>
                            <use href="#t-rack" x="770" y="640" width="34" height="24"/>
                            <path d="M736 608v28l24-2M765 618l-2 15h20l5-7-10-8M753 636v34l8-8 10-8M748 657c8 10 14 2 24-3M757 640l3-10"/>
                            <path d="M753 636v16M745 655l5 7M760 660l12-6" stroke="#777" stroke-width="1.800" stroke-dasharray="1 .8"/>
                            <path d="M724 625h4M723 635h4M727 646h4M742 634h5M760 616h5M768 627h4M752 634h4M763 633h4M740 643h4M740 658h4M741 668h4M750 670h4M766 668h4M778 655h4M755 645h6M799 605h7" stroke="#999" stroke-width="1.300"/>
                        </svg>
                    </a>
                </div>
            </div>
            <div class="w-[202px] shrink-0">
                <h3 class="flex h-[18px] items-center gap-2 bg-[#cbcbcb] pl-0.5"><a href="#">070 POWER STEERING PUMP</a><svg class="size-3.5"><use href="#i-edit"/></svg></h3>
                <a href="#" class="ml-[3px] mt-0.5 block h-[87px] w-[122px] border border-[#d5d5d5]">
                    <svg class="h-full w-full" viewBox="829 590 122 87" fill="none" stroke="#aaa" stroke-width=".6">
                        <path d="M841 672h104v-68M896 604v68M896 635h49" stroke="#ddd"/>
                        <use href="#t-blob" x="850" y="616" width="16" height="16"/>
                        <use href="#t-blob" x="864" y="628" width="20" height="20"/>
                        <use href="#t-blob" x="898" y="613" width="15" height="20"/>
                        <use href="#t-blob" x="916" y="606" width="20" height="22"/>
                        <use href="#t-blob" x="910" y="640" width="20" height="24"/>
                        <path d="M856 650l12-5v12l-10-5M870 646v12M912 626h8M910 648l6 8M920 645l6 10" stroke="#999"/>
                        <path d="M922 608l2 14M915 648l1 8M927 618l7 8" stroke="#666" stroke-width="3" stroke-dasharray="1 .6"/>
                        <path d="M849 626h4M869 624h4M875 626h6M884 638h4M855 651h4M860 657h4M934 611h4M935 628h4M912 640h4M928 645h4M921 668h4M929 665h3M935 605h8M931 637h12" stroke="#aaa" stroke-width="1.300"/>
                    </svg>
                </a>
            </div>
            <div class="w-[260px] shrink-0">
                <h3 class="flex h-[18px] items-center gap-2 bg-[#cbcbcb] pl-0.5"><a href="#">075 STEERING OIL PIPES</a><svg class="size-3.5"><use href="#i-edit"/></svg></h3>
                <a href="#" class="ml-1 mt-0.5 block h-[87px] w-[122px] border border-[#d5d5d5]">
                    <svg class="h-full w-full" viewBox="1036 590 122 87" fill="none" stroke="#999" stroke-width=".8"><path d="M1048 671h98" stroke="#ccc" stroke-width="1.500"/><path d="M1068 653l5-3 8-8M1072 652l2 5-3 2-2-5zM1076 641l5 2"/><circle cx="1067" cy="653" r="1.500"/></svg>
                </a>
            </div>
        </section>

        <!-- horizontal scroll bar -->
        <div class="mr-1.5 mt-3 h-[9px] overflow-hidden rounded-full bg-[#d8d8d8]">
            <div class="h-full w-[62.600%] rounded-full bg-[#808080]"></div>
        </div>
    </div>
</body>
</html>
